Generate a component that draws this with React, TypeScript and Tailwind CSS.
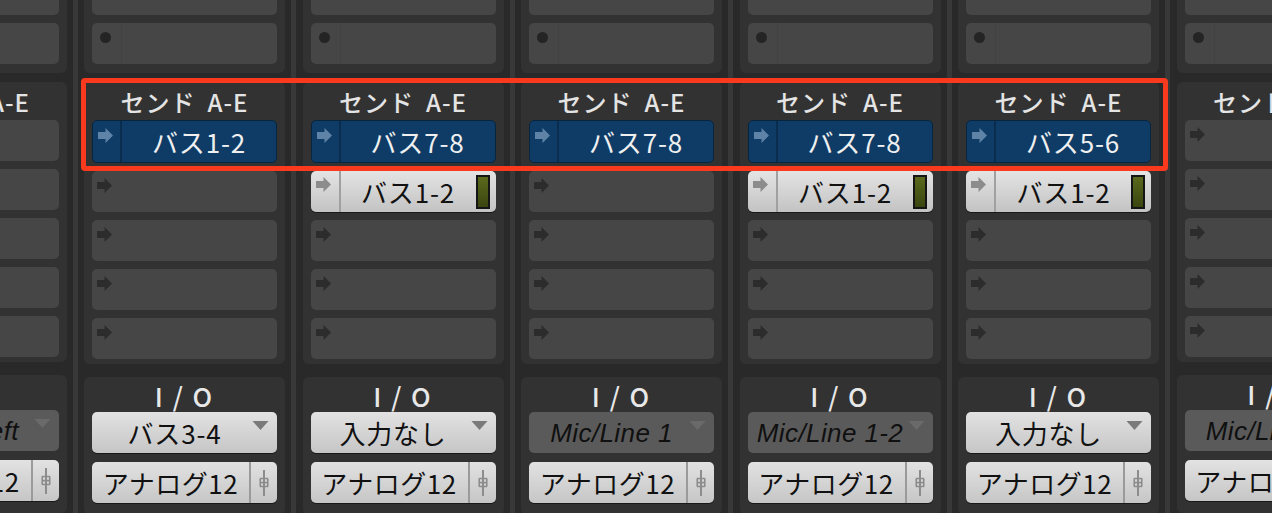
import React from "react";

interface ChannelProps {
  send1: string | null;
  send2: string | null;
  input: string;
  dim: boolean;
  output: string;
}

const channels: ChannelProps[] = [
  { send1: null, send2: null, input: "Line 1 Left", dim: true, output: "アナログ12" },
  { send1: "バス1-2", send2: null, input: "バス3-4", dim: false, output: "アナログ12" },
  { send1: "バス7-8", send2: "バス1-2", input: "入力なし", dim: false, output: "アナログ12" },
  { send1: "バス7-8", send2: null, input: "Mic/Line 1", dim: true, output: "アナログ12" },
  { send1: "バス7-8", send2: "バス1-2", input: "Mic/Line 1-2", dim: true, output: "アナログ12" },
  { send1: "バス5-6", send2: "バス1-2", input: "入力なし", dim: false, output: "アナログ12" },
  { send1: null, send2: null, input: "Mic/Line 1", dim: true, output: "アナログ12" },
];

function Arrow({ className }: { className: string }) {
  return (
    <svg viewBox="0 0 14 14" className={className}>
      <path d="M0 3.8h7V0l7 7-7 7v-3.8H0z" fill="currentColor" />
    </svg>
  );
}

function Fader() {
  return (
    <svg viewBox="0 0 10 26" className="h-[26px] w-[10px] text-[#8c8c8c]">
      <rect x="4" y="0" width="2" height="26" fill="currentColor" />
      <rect x="1.25" y="8.5" width="7.5" height="8" rx="0.5" fill="none" stroke="currentColor" strokeWidth="1.6" />
      <rect x="1.25" y="11.8" width="7.5" height="1.6" fill="currentColor" />
    </svg>
  );
}

function EmptySlot() {
  return (
    <div className="h-[41px] rounded-[5px] bg-[#464646] pl-[5px] pt-[7px]">
      <Arrow className="h-[15px] w-[15px] text-[#2c2c2c]" />
    </div>
  );
}

function BlueSend({ label }: { label: string }) {
  return (
    <div className="flex h-[43px] rounded-[5px] border border-[#082540] bg-[#0f3c66] text-[#f0f0f0]">
      <div className="w-[29px] shrink-0 border-r-2 border-[#0a2d4e] pl-[5px] pt-[7px]">
        <Arrow className="h-[15px] w-[15px] text-[#5f83a6]" />
      </div>
      <div className="flex flex-1 items-center justify-center pt-[1px] text-[26px] leading-none tracking-[0.8px]">
        {label}
      </div>
    </div>
  );
}

function LightSend({ label }: { label: string }) {
  return (
    <div className="flex h-[41px] items-center rounded-[5px] bg-linear-to-b from-[#e4e4e4] to-[#c3c3c3] text-[#111] shadow-[0_1px_0_rgba(0,0,0,0.5)]">
      <div className="h-full w-[30px] shrink-0 border-r-2 border-[#a0a0a0] pl-[5px] pt-[6px]">
        <Arrow className="h-[15px] w-[15px] text-[#8c8c8c]" />
      </div>
      <div className="flex-1 pt-[1px] text-center text-[26px] leading-none tracking-[0.8px]">{label}</div>
      <div className="mr-[6px] h-[34px] w-[14px] border-2 border-[#151515] bg-linear-to-b from-[#5a6a1c] to-[#3a4510]" />
    </div>
  );
}

function Channel({ send1, send2, input, dim, output }: ChannelProps) {
  return (
    <div className="flex w-[218.5px] shrink-0">
      <div className="flex w-[201px] shrink-0 flex-col">
        {/* Inserts */}
        <div className="-mt-[34px] flex flex-col gap-2 rounded-[6px] bg-[#323232] px-2 pt-2 pb-[9px]">
          <div className="h-[41px] rounded-[5px] bg-[#464646]" />
          <div className="flex h-[41px] rounded-[5px] bg-[#464646]">
            <div className="w-[30px] border-r border-[#424242] pl-[8px] pt-[9px]">
              <div className="h-[11px] w-[11px] rounded-full bg-[#242424]" />
            </div>
          </div>
        </div>

        {/* Sends */}
        <div className="mt-[9px] flex flex-col rounded-[6px] bg-[#323232] px-2 pb-[5px]">
          <div className="flex h-[38px] items-center justify-center whitespace-nowrap pt-[1px] text-[24px] font-medium leading-none tracking-[1px] text-[#e4e4e4]">
            <span>センド</span>
            <span className="ml-[12px]">A-E</span>
          </div>
          <div className="flex flex-col gap-2">
            {send1 ? <BlueSend label={send1} /> : <EmptySlot />}
            {send2 ? <LightSend label={send2} /> : <EmptySlot />}
            <EmptySlot />
            <EmptySlot />
            <EmptySlot />
          </div>
        </div>

        {/* I/O */}
        <div className="mt-[13px] flex flex-col rounded-[6px] bg-[#323232] px-2 pb-3">
          <div className="flex h-[35px] items-center justify-center whitespace-nowrap pt-[2px] text-[26px] font-medium leading-none tracking-[2px] text-[#e8e8e8]">
            I / O
          </div>
          <div
            className={
              dim
                ? "relative flex h-[41px] items-center justify-center rounded-[5px] bg-[#5a5a5a] pr-[20px]"
                : "relative flex h-[41px] items-center justify-center rounded-[5px] bg-linear-to-b from-[#e2e2e2] to-[#c6c6c6] pr-[20px] shadow-[0_1px_0_rgba(0,0,0,0.5)]"
            }
          >
            <span
              className={
                dim
                  ? "whitespace-nowrap font-['Liberation_Sans',sans-serif] text-[26px] italic leading-none tracking-[0.4px] text-[#101010]"
                  : "whitespace-nowrap pt-[1px] text-[26px] leading-none tracking-[0.8px] text-[#111]"
              }
            >
              {input}
            </span>
            <svg
              viewBox="0 0 16 9"
              className={
                dim
                  ? "absolute right-[8px] top-[9px] h-[9px] w-[17px] text-[#6a6a6a]"
                  : "absolute right-[8px] top-[9px] h-[9px] w-[17px] text-[#7a7a7a]"
              }
            >
              <path d="M0 0h16L8 9z" fill="currentColor" />
            </svg>
          </div>
          <div className="mt-[9px] flex h-[41px] rounded-[5px] bg-linear-to-b from-[#e2e2e2] to-[#c6c6c6] text-[#111] shadow-[0_1px_0_rgba(0,0,0,0.5)]">
            <div className="flex flex-1 items-center justify-center whitespace-nowrap pt-[1px] text-[26px] leading-none tracking-[0.5px]">
              {output}
            </div>
            <div className="flex w-[28px] shrink-0 items-center justify-center border-l-2 border-[#9a9a9a]">
              <Fader />
            </div>
          </div>
        </div>
      </div>

      {/* channel separator */}
      <div className="flex w-[17.5px] shrink-0 justify-center">
        <div className="h-full w-[5px] bg-[#383838]" />
      </div>
    </div>
  );
}

export default function App() {
  return (
    <div className="relative h-[513px] w-[1272px] overflow-hidden bg-[#292929] font-['Noto_Sans_CJK_JP',sans-serif]">
      <div className="-ml-[134.5px] flex">
        {channels.map((ch, i) => (
          <Channel key={i} {...ch} />
        ))}
      </div>

      {/* highlight box */}
      <div className="absolute left-[81px] top-[78px] h-[93px] w-[1087px] rounded-[4px] border-[5px] border-[#fa3a1e]" />
    </div>
  );
}
